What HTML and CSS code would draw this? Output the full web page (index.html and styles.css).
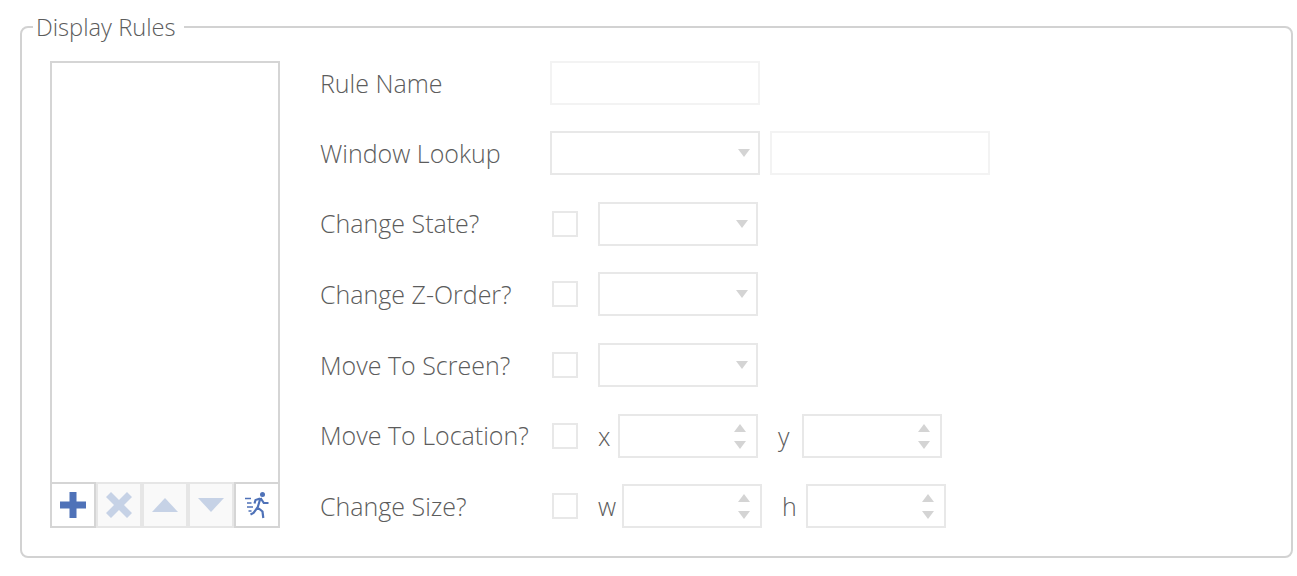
FILE: index.html
```html
<!DOCTYPE html>
<html lang="en">
<head>
<meta charset="utf-8">
<title>Display Rules</title>
<link rel="stylesheet" href="styles.css">
</head>
<body>
<fieldset class="panel">
  <legend class="panel-title">Display Rules</legend>
  <div class="panel-body">
    <div class="rule-list">
      <div class="rule-items"></div>
      <div class="rule-tools">
        <button class="tool" type="button" aria-label="Add">
          <svg width="26" height="26" viewBox="0 0 26 26"><path class="icon-on" d="M9.500 0h7v9.500H26v7h-9.500V26h-7v-9.500H0v-7h9.500z"/></svg>
        </button>
        <button class="tool tool-off" type="button" aria-label="Remove">
          <svg width="26" height="26" viewBox="0 0 26 26"><path class="icon-off" d="M5 0l8 8 8-8 5 5-8 8 8 8-5 5-8-8-8 8-5-5 8-8-8-8z"/></svg>
        </button>
        <button class="tool tool-off" type="button" aria-label="Move up">
          <svg width="26" height="14" viewBox="0 0 26 14"><path class="icon-off" d="M13 0l13 14H0z"/></svg>
        </button>
        <button class="tool tool-off" type="button" aria-label="Move down">
          <svg width="26" height="14" viewBox="0 0 26 14"><path class="icon-off" d="M0 0h26L13 14z"/></svg>
        </button>
        <button class="tool" type="button" aria-label="Run">
          <svg width="24" height="27" viewBox="0 0 24 27">
            <circle class="icon-on" cx="17.500" cy="2.600" r="2.500"/>
            <path class="runner" d="M15.500 6l-3 10M15.500 6l3.300 5h4.700M15 6.500l-4.500 1.500-1 3.500M12.500 15.500l-4 5.500-3 1.500M12.500 15.500l5 4 .8 6.500"/>
            <path class="runner-thin" d="M0 6.500h6M2 11h4.500M2 15h6M3.500 19h3"/>
          </svg>
        </button>
      </div>
    </div>
    <div class="rule-form">
      <div class="row">
        <span class="label">Rule Name</span>
        <span class="box box-faint w210"></span>
      </div>
      <div class="row">
        <span class="label">Window Lookup</span>
        <span class="box w210 select"><i class="tri-down"></i></span>
        <span class="box box-faint w220 gap10"></span>
      </div>
      <div class="row row-late">
        <span class="label label-up">Change State?</span>
        <span class="check"></span>
        <span class="box w160 select"><i class="tri-down"></i></span>
      </div>
      <div class="row">
        <span class="label">Change Z-Order?</span>
        <span class="check"></span>
        <span class="box w160 select"><i class="tri-down"></i></span>
      </div>
      <div class="row row-late">
        <span class="label">Move To Screen?</span>
        <span class="check"></span>
        <span class="box w160 select"><i class="tri-down"></i></span>
      </div>
      <div class="row row-late">
        <span class="label label-up">Move To Location?</span>
        <span class="check"></span>
        <span class="axis axis-x">x</span>
        <span class="box w140 spin"><i class="tri-up"></i><i class="tri-down"></i></span>
        <span class="axis axis-y">y</span>
        <span class="box w140 spin"><i class="tri-up"></i><i class="tri-down"></i></span>
      </div>
      <div class="row">
        <span class="label">Change Size?</span>
        <span class="check"></span>
        <span class="axis axis-w">w</span>
        <span class="box w140 spin"><i class="tri-up"></i><i class="tri-down"></i></span>
        <span class="axis axis-h">h</span>
        <span class="box w140 spin"><i class="tri-up"></i><i class="tri-down"></i></span>
      </div>
    </div>
  </div>
</fieldset>
</body>
</html>
```
FILE: styles.css
```css
* { box-sizing: border-box; }
html, body { margin: 0; height: 100%; overflow: hidden; background: #fff; }
body {
  padding: 11px 4px 0 20px;
  font-family: "Open Sans", "Noto Sans", sans-serif;
  font-size: 25px;
  font-weight: 300;
  color: #5c5c5c;
}
.panel {
  margin: 0;
  height: 547px;
  padding: 18px 28px 28px 28px;
  border: 2px solid #d2d2d2;
  border-radius: 8px;
}
.panel-title {
  margin-left: -17px;
  padding: 0 8px 0 3px;
  height: 32px;
  line-height: 32px;
  font-size: 23.700px;
}
.panel-body { display: flex; height: 467px; }
.rule-list { width: 230px; display: flex; flex-direction: column; }
.rule-items {
  flex: 1;
  border: 2px solid #d5d5d5;
  border-bottom: 0;
}
.rule-tools { display: grid; grid-template-columns: repeat(5, 46px); height: 46px; }
.tool {
  display: flex;
  align-items: center;
  justify-content: center;
  padding: 0;
  background: #fff;
  border: 2px solid #d5d5d5;
}
.tool-off {
  background: #f9f9f9;
  border: 2px solid #e6e6e6;
}
.icon-on { fill: #4f72b8; }
.icon-off { fill: #c6d2e6; }
.runner { fill: none; stroke: #4f72b8; stroke-width: 2.2; }
.runner-thin { fill: none; stroke: #4f72b8; stroke-width: 1.6; }
.rule-form {
  margin-left: 40px;
  display: flex;
  flex-direction: column;
  gap: 26px;
}
.row { display: flex; align-items: center; height: 44px; }
.row-late { margin-top: 1px; }
.label { width: 230px; white-space: nowrap; }
.label-up { margin-top: -2px; }
.box {
  position: relative;
  display: block;
  height: 44px;
  background: #fff;
  border: 2px solid #e8e8e8;
}
.box-faint { border-color: #f3f3f3; }
.w210 { width: 210px; }
.w220 { width: 220px; }
.w160 { width: 160px; }
.w140 { width: 140px; }
.gap10 { margin-left: 10px; }
.check {
  width: 26px;
  height: 26px;
  margin: 0 20px 0 2px;
  border: 2px solid #e8e8e8;
}
.tri-down, .tri-up {
  position: absolute;
  right: 8px;
  width: 0;
  height: 0;
  border-left: 6px solid transparent;
  border-right: 6px solid transparent;
}
.tri-down { border-top: 8px solid #d4d4d4; }
.tri-up { border-bottom: 8px solid #d4d4d4; }
.select .tri-down { top: 16px; }
.spin .tri-up { right: 10px; top: 8px; }
.spin .tri-down { right: 10px; top: 25px; }
.axis { display: block; line-height: 44px; }
.axis-x { width: 20px; }
.axis-y { width: 24px; margin-left: 20px; }
.axis-w { width: 24px; }
.axis-h { width: 24px; margin-left: 20px; }
```
